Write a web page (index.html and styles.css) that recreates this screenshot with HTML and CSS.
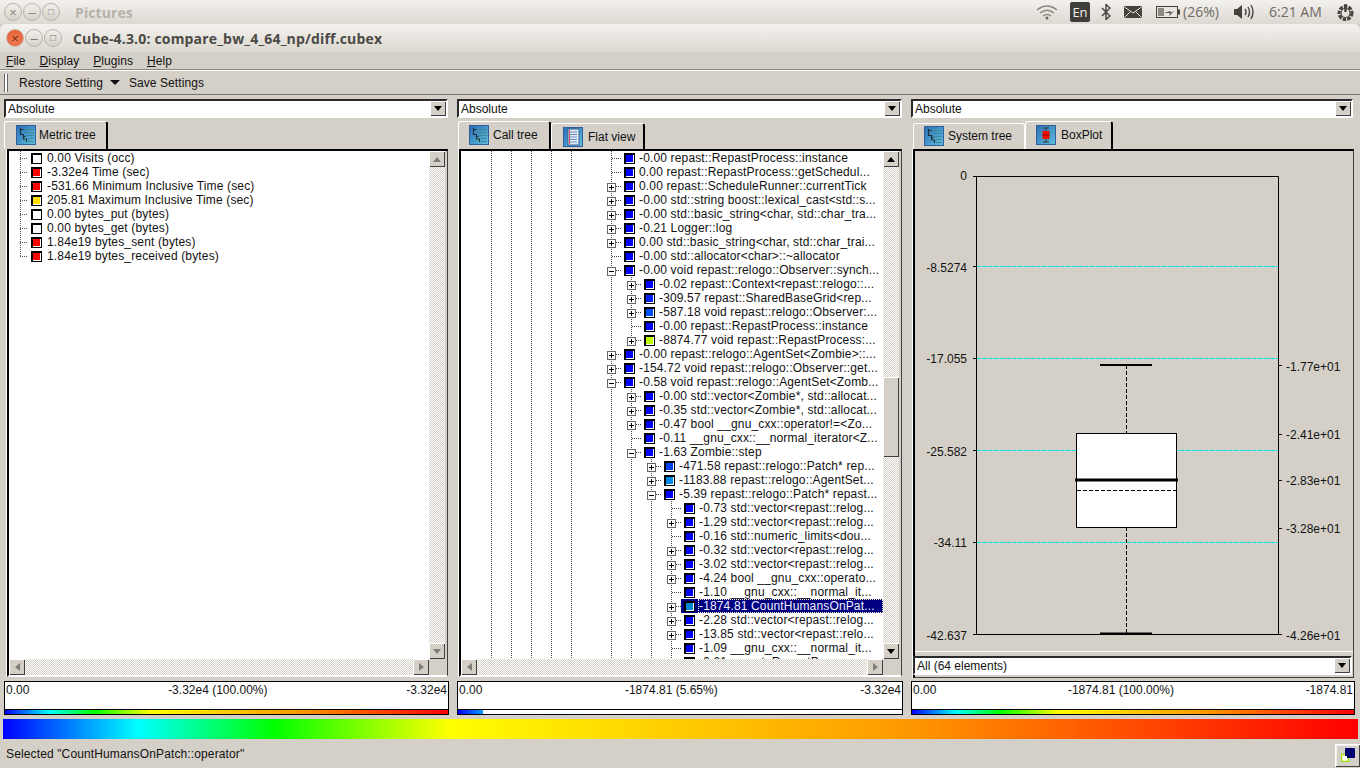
FILE: index.html
```html
<!DOCTYPE html>
<html lang="en">
<head>
<meta charset="utf-8">
<title>Cube-4.3.0</title>
<link rel="stylesheet" href="styles.css">
</head>
<body>
<svg class="defs" width="0" height="0">
  <defs>
    <linearGradient id="blue" x1="0" y1="0" x2="1" y2="1">
      <stop offset="0" stop-color="#2a6cb4"/><stop offset="1" stop-color="#5fc0dc"/>
    </linearGradient>
    <symbol id="i-tree" viewBox="0 0 20 20">
      <rect x="0.5" y="0.5" width="19" height="19" fill="url(#blue)" stroke="#2f5f9f"/>
      <path d="M8 4.500h10M8 7.500h10M10 10.500h8M12 13.500h6M12 16.500h6" stroke="#3f8796" stroke-width="1.200"/>
      <path d="M4.500 3v6.500h3V14h3v3" fill="none" stroke="#1c2c3c" stroke-width="1.100"/>
      <path d="M4.500 4.500h3M7.500 11.500h2" stroke="#1c2c3c" stroke-width="1"/>
      <path d="M8 14h2" stroke="#2c8c50" stroke-width="1"/>
    </symbol>
    <symbol id="i-flat" viewBox="0 0 20 20">
      <rect x="0.5" y="0.5" width="19" height="19" fill="url(#blue)" stroke="#2f5f9f"/>
      <rect x="5" y="2" width="11" height="16" fill="#dfeaf4" stroke="#3a5f90"/>
      <path d="M7 5h7M7 7.5h7M7 10h7M7 12.500h7M7 15h7" stroke="#6a90c0"/>
      <path d="M6.500 3v14" stroke="#d05060"/>
    </symbol>
    <symbol id="i-box" viewBox="0 0 20 20">
      <rect x="0.5" y="0.5" width="19" height="19" fill="url(#blue)" stroke="#2f5f9f"/>
      <path d="M7 3h6M10 3v14M7 17h6" fill="none" stroke="#333"/>
      <rect x="6.500" y="6" width="7" height="8" fill="#f01000"/>
      <path d="M6.500 10h7" stroke="#800"/>
    </symbol>
  </defs>
</svg>
<div class="app">
  <header class="panel">
    <div class="wbtns">
      <span class="wbtn dim">×</span><span class="wbtn dim">–</span><span class="wbtn dim sq">□</span>
    </div>
    <span class="panel-title">Pictures</span>
    <div class="indicators">
      <svg class="ic-wifi" width="22" height="16" viewBox="0 0 22 16"><path d="M1 6q10-8 20 0M4 9q7-5.500 14 0M7 12q4-3 8 0" fill="none" stroke="#8d8880" stroke-width="1.500"/><circle cx="11" cy="14" r="1.500" fill="#6b665f"/></svg>
      <span class="en">En</span>
      <svg class="ic-bt" width="10" height="16" viewBox="0 0 10 16"><path d="M1 4l8 8-4 3.500V.5l4 3.500-8 8" fill="none" stroke="#4a4640" stroke-width="1.500"/></svg>
      <svg class="ic-mail" width="18" height="12" viewBox="0 0 18 12"><rect width="18" height="12" rx="1" fill="#45413b"/><path d="M0.500 1l8.500 6 8.500-6M0.500 11.500l6-6M17.500 11.500l-6-6" fill="none" stroke="#e8e4df"/></svg>
      <svg class="ic-batt" width="24" height="12" viewBox="0 0 24 12"><rect x="0.500" y="0.500" width="21" height="11" fill="#e8e4df" stroke="#45413b"/><rect x="2" y="2" width="6" height="8" fill="#8d8880"/><rect x="22" y="3.500" width="2" height="5" fill="#45413b"/><path d="M8 7l7-2-1 2 4-2-5 5 1-3z" fill="#45413b"/></svg>
      <span class="ptext pct">(26%)</span>
      <svg class="ic-vol" width="20" height="16" viewBox="0 0 20 16"><path d="M0 5h3l5-4v14l-5-4H0z" fill="#45413b"/><path d="M11 5q2 3 0 6M14 3q3 5 0 10M17 1q4 7 0 14" fill="none" stroke="#45413b" stroke-width="1.400"/></svg>
      <span class="ptext clock">6:21 AM</span>
      <svg class="ic-power" width="19" height="19" viewBox="0 0 19 19"><circle cx="9.500" cy="10" r="6.500" fill="none" stroke="#45413b" stroke-width="3" stroke-dasharray="3.500 1.200"/><circle cx="9.500" cy="10" r="4.500" fill="none" stroke="#45413b" stroke-width="1.200"/><path d="M9.500 1v8" stroke="#45413b" stroke-width="2.400"/></svg>
    </div>
  </header>

  <div class="titlebar">
    <div class="wbtns">
      <span class="wbtn close">×</span><span class="wbtn">–</span><span class="wbtn sq">□</span>
    </div>
    <span class="win-title">Cube-4.3.0: compare_bw_4_64_np/diff.cubex</span>
  </div>

  <nav class="menubar">
    <span><u>F</u>ile</span><span><u>D</u>isplay</span><span><u>P</u>lugins</span><span><u>H</u>elp</span>
  </nav>

  <div class="toolbar">
    <span class="grip"></span>
    <span>Restore Setting</span>
    <span class="tb-arrow"></span>
    <span>Save Settings</span>
  </div>

  <main class="columns">
    <section class="col col-left">
      <div class="combo"><span class="combo-text">Absolute</span><span class="sbtn"><i class="tri down"></i></span></div>
      <div class="tabs">
        <div class="tab active tab-metric"><svg class="tab-ic"><use href="#i-tree"/></svg>Metric tree</div>
      </div>
      <div class="frame frame-tree">
        <div class="viewport">
          <div class="mrow"><span class="hd"></span><span class="sw"></span><span class="tx">0.00 Visits (occ)</span></div>
          <div class="mrow"><span class="hd"></span><span class="sw red"></span><span class="tx">-3.32e4 Time (sec)</span></div>
          <div class="mrow"><span class="hd"></span><span class="sw red"></span><span class="tx">-531.66 Minimum Inclusive Time (sec)</span></div>
          <div class="mrow"><span class="hd"></span><span class="sw yellow"></span><span class="tx">205.81 Maximum Inclusive Time (sec)</span></div>
          <div class="mrow"><span class="hd"></span><span class="sw"></span><span class="tx">0.00 bytes_put (bytes)</span></div>
          <div class="mrow"><span class="hd"></span><span class="sw"></span><span class="tx">0.00 bytes_get (bytes)</span></div>
          <div class="mrow"><span class="hd"></span><span class="sw red"></span><span class="tx">1.84e19 bytes_sent (bytes)</span></div>
          <div class="mrow end"><span class="hd"></span><span class="sw red"></span><span class="tx">1.84e19 bytes_received (bytes)</span></div>
        </div>
        <div class="vbar">
          <span class="sbtn dis"><i class="tri up"></i></span>
          <span class="track"></span>
          <span class="sbtn dis"><i class="tri down"></i></span>
        </div>
        <div class="hbar">
          <span class="sbtn dis"><i class="tri left"></i></span>
          <span class="track"></span>
          <span class="sbtn dis"><i class="tri right"></i></span>
        </div>
        <span class="corner"></span>
      </div>
      <div class="vbox">
        <div class="vtext"><span>0.00</span><span>-3.32e4 (100.00%)</span><span>-3.32e4</span></div>
        <div class="vgrad"><div class="vfill"></div></div>
      </div>
    </section>

    <section class="col col-mid">
      <div class="combo"><span class="combo-text">Absolute</span><span class="sbtn"><i class="tri down"></i></span></div>
      <div class="tabs">
        <div class="tab active tab-call"><svg class="tab-ic"><use href="#i-tree"/></svg>Call tree</div>
        <div class="tab tab-flat"><svg class="tab-ic"><use href="#i-flat"/></svg>Flat view</div>
      </div>
      <div class="frame frame-tree">
        <div class="viewport">
          <div class="row l0"><span class="hd"></span><span class="sw blue"></span><span class="tx">-0.00 repast::RepastProcess::instance</span></div>
          <div class="row l0"><span class="hd"></span><span class="sw blue"></span><span class="tx">0.00 repast::RepastProcess::getSchedul...</span></div>
          <div class="row l0"><span class="hd"><b class="ex plus"></b></span><span class="sw blue"></span><span class="tx">0.00 repast::ScheduleRunner::currentTick</span></div>
          <div class="row l0"><span class="hd"><b class="ex plus"></b></span><span class="sw blue"></span><span class="tx">-0.00 std::string boost::lexical_cast&lt;std::s...</span></div>
          <div class="row l0"><span class="hd"><b class="ex plus"></b></span><span class="sw blue"></span><span class="tx">-0.00 std::basic_string&lt;char, std::char_tra...</span></div>
          <div class="row l0"><span class="hd"><b class="ex plus"></b></span><span class="sw blue"></span><span class="tx">-0.21 Logger::log</span></div>
          <div class="row l0"><span class="hd"><b class="ex plus"></b></span><span class="sw blue"></span><span class="tx">0.00 std::basic_string&lt;char, std::char_trai...</span></div>
          <div class="row l0"><span class="hd"></span><span class="sw blue"></span><span class="tx">-0.00 std::allocator&lt;char&gt;::~allocator</span></div>
          <div class="row l0"><span class="hd"><b class="ex"></b></span><span class="sw blue"></span><span class="tx">-0.00 void repast::relogo::Observer::synch...</span></div>
          <div class="row l1"><span class="hd"><b class="ex plus"></b></span><span class="sw blue"></span><span class="tx">-0.02 repast::Context&lt;repast::relogo::...</span></div>
          <div class="row l1"><span class="hd"><b class="ex plus"></b></span><span class="sw b2"></span><span class="tx">-309.57 repast::SharedBaseGrid&lt;rep...</span></div>
          <div class="row l1"><span class="hd"><b class="ex plus"></b></span><span class="sw b3"></span><span class="tx">-587.18 void repast::relogo::Observer:...</span></div>
          <div class="row l1"><span class="hd"></span><span class="sw blue"></span><span class="tx">-0.00 repast::RepastProcess::instance</span></div>
          <div class="row l1 end"><span class="hd"><b class="ex plus"></b></span><span class="sw lime"></span><span class="tx">-8874.77 void repast::RepastProcess:...</span></div>
          <div class="row l0"><span class="hd"><b class="ex plus"></b></span><span class="sw blue"></span><span class="tx">-0.00 repast::relogo::AgentSet&lt;Zombie&gt;::...</span></div>
          <div class="row l0"><span class="hd"><b class="ex plus"></b></span><span class="sw blue"></span><span class="tx">-154.72 void repast::relogo::Observer::get...</span></div>
          <div class="row l0"><span class="hd"><b class="ex"></b></span><span class="sw blue"></span><span class="tx">-0.58 void repast::relogo::AgentSet&lt;Zomb...</span></div>
          <div class="row l1"><span class="hd"><b class="ex plus"></b></span><span class="sw blue"></span><span class="tx">-0.00 std::vector&lt;Zombie*, std::allocat...</span></div>
          <div class="row l1"><span class="hd"><b class="ex plus"></b></span><span class="sw blue"></span><span class="tx">-0.35 std::vector&lt;Zombie*, std::allocat...</span></div>
          <div class="row l1"><span class="hd"><b class="ex plus"></b></span><span class="sw blue"></span><span class="tx">-0.47 bool __gnu_cxx::operator!=&lt;Zo...</span></div>
          <div class="row l1"><span class="hd"></span><span class="sw blue"></span><span class="tx">-0.11 __gnu_cxx::__normal_iterator&lt;Z...</span></div>
          <div class="row l1"><span class="hd"><b class="ex"></b></span><span class="sw blue"></span><span class="tx">-1.63 Zombie::step</span></div>
          <div class="row l2"><span class="hd"><b class="ex plus"></b></span><span class="sw b4"></span><span class="tx">-471.58 repast::relogo::Patch* rep...</span></div>
          <div class="row l2"><span class="hd"><b class="ex plus"></b></span><span class="sw b5"></span><span class="tx">-1183.88 repast::relogo::AgentSet...</span></div>
          <div class="row l2"><span class="hd"><b class="ex"></b></span><span class="sw blue"></span><span class="tx">-5.39 repast::relogo::Patch* repast...</span></div>
          <div class="row l3"><span class="hd"></span><span class="sw blue"></span><span class="tx">-0.73 std::vector&lt;repast::relog...</span></div>
          <div class="row l3"><span class="hd"><b class="ex plus"></b></span><span class="sw blue"></span><span class="tx">-1.29 std::vector&lt;repast::relog...</span></div>
          <div class="row l3"><span class="hd"></span><span class="sw blue"></span><span class="tx">-0.16 std::numeric_limits&lt;dou...</span></div>
          <div class="row l3"><span class="hd"><b class="ex plus"></b></span><span class="sw blue"></span><span class="tx">-0.32 std::vector&lt;repast::relog...</span></div>
          <div class="row l3"><span class="hd"><b class="ex plus"></b></span><span class="sw blue"></span><span class="tx">-3.02 std::vector&lt;repast::relog...</span></div>
          <div class="row l3"><span class="hd"><b class="ex plus"></b></span><span class="sw blue"></span><span class="tx">-4.24 bool __gnu_cxx::operato...</span></div>
          <div class="row l3"><span class="hd"></span><span class="sw blue"></span><span class="tx">-1.10 __gnu_cxx::__normal_it...</span></div>
          <div class="row l3 selected"><span class="hd"><b class="ex plus"></b></span><span class="sel"><span class="sw b6"></span><span class="tx">-1874.81 CountHumansOnPat...</span></span></div>
          <div class="row l3"><span class="hd"><b class="ex plus"></b></span><span class="sw blue"></span><span class="tx">-2.28 std::vector&lt;repast::relog...</span></div>
          <div class="row l3"><span class="hd"><b class="ex plus"></b></span><span class="sw blue"></span><span class="tx">-13.85 std::vector&lt;repast::relo...</span></div>
          <div class="row l3"><span class="hd"></span><span class="sw blue"></span><span class="tx">-1.09 __gnu_cxx::__normal_it...</span></div>
          <div class="row l3"><span class="hd"></span><span class="sw blue"></span><span class="tx">-0.01 repast::RepastProcess...</span></div>
        </div>
        <div class="vbar">
          <span class="sbtn"><i class="tri up"></i></span>
          <span class="track track-a"></span>
          <span class="thumb"></span>
          <span class="track"></span>
          <span class="sbtn"><i class="tri down"></i></span>
        </div>
        <div class="hbar">
          <span class="sbtn dis"><i class="tri left"></i></span>
          <span class="track"></span>
          <span class="sbtn dis"><i class="tri right"></i></span>
        </div>
        <span class="corner"></span>
      </div>
      <div class="vbox">
        <div class="vtext"><span>0.00</span><span>-1874.81 (5.65%)</span><span>-3.32e4</span></div>
        <div class="vgrad"><div class="vfill part" style="width:5.65%"></div></div>
      </div>
    </section>

    <section class="col col-right">
      <div class="combo"><span class="combo-text">Absolute</span><span class="sbtn"><i class="tri down"></i></span></div>
      <div class="tabs">
        <div class="tab tab-sys"><svg class="tab-ic"><use href="#i-tree"/></svg>System tree</div>
        <div class="tab active tab-box"><svg class="tab-ic"><use href="#i-box"/></svg>BoxPlot</div>
      </div>
      <div class="frame frame-plot">
        <svg class="plot" width="438" height="500" viewBox="915 151 438 500">
          <g class="cy">
            <path d="M976 266.500H1278M976 358.500H1278M976 450.500H1278M976 542.500H1278"/>
          </g>
          <g class="ax">
            <path d="M976.500 176.500V634.500M1278.500 176.500V634.500M973 176.500H1278.500M973 634.500H1278.500"/>
            <path d="M973 266.500h3M973 358.500h3M973 450.500h3M973 542.500h3"/>
            <path d="M1278 365.500h4M1278 434.500h4M1278 480.500h4M1278 528.500h4M1278 634.500h4"/>
          </g>
          <path class="wh" d="M1126.500 365V433M1126.500 527V634"/>
          <rect class="bx" x="1076.500" y="433.500" width="100" height="94"/>
          <path class="cap" d="M1100 365h52M1100 633.500h52"/>
          <path class="med" d="M1075 480h103"/>
          <path class="mean" d="M1077 490.500h99"/>
          <g class="ll">
            <text x="967" y="180">0</text>
            <text x="967" y="272">-8.5274</text>
            <text x="967" y="363">-17.055</text>
            <text x="967" y="456">-25.582</text>
            <text x="967" y="547">-34.11</text>
            <text x="967" y="640">-42.637</text>
          </g>
          <g class="rl">
            <text x="1286" y="371">-1.77e+01</text>
            <text x="1286" y="439">-2.41e+01</text>
            <text x="1286" y="485">-2.83e+01</text>
            <text x="1286" y="533">-3.28e+01</text>
            <text x="1286" y="640">-4.26e+01</text>
          </g>
        </svg>
        <div class="combo combo-in"><span class="combo-text">All (64 elements)</span><span class="sbtn"><i class="tri down"></i></span></div>
      </div>
      <div class="vbox">
        <div class="vtext"><span>0.00</span><span>-1874.81 (100.00%)</span><span>-1874.81</span></div>
        <div class="vgrad"><div class="vfill"></div></div>
      </div>
    </section>
  </main>

  <div class="spectrum"></div>

  <footer class="status">
    <span class="status-text">Selected "CountHumansOnPatch::operator"</span>
    <span class="cornerbtn"><svg width="14" height="14" viewBox="0 0 14 14"><rect x="0.500" y="6.500" width="7" height="7" fill="#fff" stroke="#a0e000" stroke-width="1.500"/><rect x="4" y="0" width="10" height="10" rx="1" fill="#000070"/><rect x="2" y="8" width="4" height="4" fill="#fff"/></svg></span>
  </footer>
</div>
</body>
</html>
```
FILE: styles.css
```css
* { box-sizing: border-box; }
html, body { margin: 0; padding: 0; }
body {
  width: 1360px; height: 768px; overflow: hidden;
  background: #d4d0c8; color: #111;
  font: 12px/14px "Liberation Sans", Arial, sans-serif;
}
.defs { display: block; height: 0; }
.app { display: flex; flex-direction: column; width: 1360px; height: 768px; }

/* desktop panel */
.panel {
  display: flex; align-items: center; height: 24px; flex: none;
  padding-left: 4px;
  background: linear-gradient(#f3f1ee, #dcd8d2);
}
.wbtns { display: flex; gap: 1px; }
.wbtn {
  display: flex; align-items: center; justify-content: center;
  width: 18px; height: 18px; border-radius: 50%;
  border: 1px solid #b8b4ac; background: linear-gradient(#f2f0ec, #d6d2ca);
  color: #7a766e; font-size: 13px; line-height: 1;
}
.wbtn.sq { font-size: 10px; }
.wbtn.dim { color: #8a867e; }
.wbtn.close { background: radial-gradient(circle at 50% 60%, #f5825a, #e2532a); border-color: #c8b8a8; color: #7a2c10; }
.panel-title {
  margin-left: 15px; color: #b6b2aa; letter-spacing: .1px;
  font: bold 14px "Open Sans", "Noto Sans", sans-serif;
}
.indicators { display: flex; align-items: center; margin-left: auto; }
.ic-wifi { margin-right: 12px; }
.en {
  width: 20px; height: 20px; margin-right: 11px; border-radius: 2px;
  background: #3f3e3a; color: #f2f0ec; text-align: center;
  font: 13px/20px "Open Sans", sans-serif;
}
.ic-bt { margin-right: 13px; }
.ic-mail { margin-right: 14px; }
.ic-batt { margin-right: 3px; }
.ptext { color: #6f6a62; font: 14px/20px "Open Sans", "Noto Sans", sans-serif; white-space: nowrap; }
.pct { width: 42px; margin-right: 9px; }
.ic-vol { margin-right: 15px; }
.clock { width: 56px; margin-right: 11px; }
.ic-power { margin-right: 5px; }

/* window chrome */
.titlebar {
  display: flex; align-items: center; height: 28px; flex: none;
  padding-left: 6px; border-radius: 6px 6px 0 0;
  background: linear-gradient(#f5f3f0, #dbd7d0);
}
.win-title {
  margin-left: 11px; color: #4c4a45; letter-spacing: .17px;
  font: bold 14px "Open Sans", "Noto Sans", sans-serif;
}
.menubar {
  display: flex; gap: 14px; height: 18px; flex: none; letter-spacing: .05px;
  padding: 2px 0 0 6px; border-bottom: 1px solid #8a867e;
}
.toolbar {
  display: flex; align-items: center; height: 25px; flex: none; letter-spacing: .08px;
  padding-left: 4px; border-top: 1px solid #fff; border-bottom: 1px solid #77736b;
}
.grip {
  width: 4px; height: 18px; margin-right: 11px;
  border-left: 1px solid #666; border-right: 1px solid #666; background: #fff;
}
.tb-arrow {
  width: 0; height: 0; margin: 0 9px 0 7px;
  border-left: 5px solid transparent; border-right: 5px solid transparent; border-top: 5px solid #111;
}

/* three columns */
.columns { display: flex; gap: 8px; padding: 4px 0 0 4px; flex: none; }
.col { display: flex; flex-direction: column; flex: none; }
.col-left { width: 445px; }
.col-mid { width: 446px; }
.col-right { width: 444px; }

.combo {
  display: flex; align-items: center; justify-content: space-between;
  height: 19px; padding-left: 2px; background: #fff;
  border: 2px solid; border-color: #2a2a2a #fff #fff #2a2a2a;
  flex: none;
}
.combo-text { line-height: 15px; padding-top: 1px; }
.col-left > .combo { margin-right: 1px; }
.col-mid > .combo { margin-right: 1px; }
.col-right > .combo { margin-right: 2px; }

.sbtn {
  display: flex; align-items: center; justify-content: center;
  width: 16px; height: 16px; flex: none; background: #d4d0c8;
  box-shadow: inset 1px 1px 0 #fff, inset -1px -1px 0 #404040;
}
.combo .sbtn { height: 15px; }
.tri { display: block; width: 0; height: 0; border: 4px solid transparent; }
.tri.down { border-top: 5px solid #000; border-bottom: 0; }
.tri.up { border-bottom: 5px solid #000; border-top: 0; }
.tri.left { border-right: 5px solid #000; border-left: 0; }
.tri.right { border-left: 5px solid #000; border-right: 0; }
.dis .tri.down { border-top-color: #807c74; }
.dis .tri.up { border-bottom-color: #807c74; }
.dis .tri.left { border-right-color: #807c74; }
.dis .tri.right { border-left-color: #807c74; }

/* tabs */
.tabs { display: flex; align-items: flex-end; height: 28px; margin-top: 3px; flex: none; }
.col-mid .tabs { padding-left: 1px; }
.tab {
  display: flex; align-items: center; gap: 4px; height: 26px;
  padding-left: 10px; border: 1px solid; border-color: #fff #000 transparent #fff;
  border-right-width: 2px; border-bottom: 0; border-radius: 3px 3px 0 0;
  white-space: nowrap; flex: none;
}
.tab.active { height: 28px; padding-bottom: 1px; }
.tab-metric { width: 104px; padding-left: 11px; gap: 3px; }
.tab-call { width: 93px; }
.tab-flat { width: 94px; padding-left: 11px; gap: 5px; }
.tab-sys { width: 112px; margin-left: 2px; border-right: 1px solid #fff; padding-bottom: 1px; }
.tab-box { width: 88px; gap: 5px; }
.tab-ic { width: 20px; height: 20px; flex: none; }

/* framed view */
.frame {
  flex: none; height: 528px; margin-left: 3px; margin-right: 1px;
  border: 2px solid; border-color: #000 #404040 #fff #000; border-right-width: 1px;
  box-shadow: -1px 0 0 #fff;
}
.frame-tree {
  display: grid; grid-template-columns: 420px 16px; grid-template-rows: 508px 16px; padding-right: 2px;
}
.col-mid .frame-tree { margin-left: 2px; grid-template-columns: 422px 16px; }
.viewport { background: #fff; overflow: hidden; min-width: 0; }

.mrow, .row {
  display: flex; align-items: center; height: 14px; flex: none; white-space: nowrap; overflow: hidden;
}
.mrow {
  padding-left: 11px;
  background: repeating-linear-gradient(#555 0 1px, transparent 1px 2px) 0 0 / 1px 100% no-repeat;
  background-position: 11px 0;
}
.mrow.end { background-size: 1px 50%; }
.mrow .hd {
  width: 11px; height: 14px; flex: none;
  background: repeating-linear-gradient(90deg, #555 0 1px, transparent 1px 2px) 0 7px / 8px 1px no-repeat;
}
.mrow .tx { letter-spacing: .15px; }
.row .tx { letter-spacing: .15px; margin-left: 4px; }

.row {
  --d: repeating-linear-gradient(#444 0 1px, transparent 1px 2px);
  background-repeat: no-repeat; background-size: 1px 100%;
}
.l0 { padding-left: 146px;
  background-image: var(--d), var(--d), var(--d), var(--d), var(--d), var(--d);
  background-position: 30px 0, 50px 0, 70px 0, 90px 0, 110px 0, 150px 0; }
.l1 { padding-left: 166px;
  background-image: var(--d), var(--d), var(--d), var(--d), var(--d), var(--d), var(--d);
  background-position: 30px 0, 50px 0, 70px 0, 90px 0, 110px 0, 150px 0, 170px 0; }
.l1.end { background-size: 1px 100%, 1px 100%, 1px 100%, 1px 100%, 1px 100%, 1px 100%, 1px 50%; }
.l2 { padding-left: 186px;
  background-image: var(--d), var(--d), var(--d), var(--d), var(--d), var(--d), var(--d), var(--d);
  background-position: 30px 0, 50px 0, 70px 0, 90px 0, 110px 0, 150px 0, 170px 0, 190px 0; }
.l3 { padding-left: 206px;
  background-image: var(--d), var(--d), var(--d), var(--d), var(--d), var(--d), var(--d), var(--d), var(--d);
  background-position: 30px 0, 50px 0, 70px 0, 90px 0, 110px 0, 150px 0, 170px 0, 190px 0, 210px 0; }

.row .hd {
  display: flex; align-items: flex-start; width: 17px; height: 14px; flex: none; padding-top: 4px;
  background: repeating-linear-gradient(90deg, #444 0 1px, transparent 1px 2px) 5px 7px / 10px 1px no-repeat;
}
.ex {
  display: block; width: 9px; height: 9px; border: 1px solid #666;
  background: linear-gradient(#000, #000) center / 5px 1px no-repeat, #fff;
}
.ex.plus {
  background: linear-gradient(#000, #000) center / 5px 1px no-repeat,
              linear-gradient(#000, #000) center / 1px 5px no-repeat, #fff;
}
.sw {
  display: block; width: 11px; height: 11px; flex: none; background: #fff;
  border: 1px solid #000; box-shadow: inset 1px 1px 0 #000, inset -1px -1px 0 #fff;
}
.sw.red { background: #f00; }
.sw.yellow { background: #ffe000; }
.sw.blue { background: #0000ff; }
.sw.b2 { background: #0020f8; }
.sw.b3 { background: #0050ff; }
.sw.b4 { background: #0040f0; }
.sw.b5 { background: #0088e8; }
.sw.b6 { background: #0088d0; }
.sw.lime { background: #c0ff00; }
.tx { margin-left: 5px; }

.row.selected { overflow: hidden; }
.sel {
  display: flex; align-items: center; flex: 1; height: 14px; margin-left: -3px; padding-left: 3px;
  background: #000080; color: #f0f0ff;
}
.row .sel .tx {
  flex: 1; height: 14px; margin-left: 3px; padding-left: 1px;
  outline: 1px dotted #f4f4c8; outline-offset: -1px;
}

.vbar { display: flex; flex-direction: column; width: 16px; height: 508px; }
.hbar { display: flex; height: 16px; }
.track {
  display: block; flex: 1;
  background: repeating-conic-gradient(#d4d0c8 0 25%, #fff 0 50%) 0 0 / 2px 2px;
}
.track-a { flex: none; height: 210px; }
.thumb {
  display: block; height: 80px; flex: none; background: #d4d0c8;
  box-shadow: inset 1px 1px 0 #fff, inset -1px -1px 0 #404040;
}
.corner { background: #d4d0c8; }

/* box plot */
.frame-plot {
  display: flex; flex-direction: column; margin-left: 2px; margin-right: 1px; height: 529px;
  border-bottom: 1px solid #404040;
}
.plot { display: block; flex: none; border-bottom: 1px solid #fff; box-sizing: content-box; }
.combo-in { margin: 4px 1px 0 -2px; }
.cy path { fill: none; stroke: #00e8e8; stroke-dasharray: 5 1; }
.ax path { fill: none; stroke: #000; }
.wh { fill: none; stroke: #000; stroke-dasharray: 4 2; }
.bx { fill: #fff; stroke: #000; }
.cap { fill: none; stroke: #000; stroke-width: 2; }
.med { fill: none; stroke: #000; stroke-width: 3; }
.mean { fill: none; stroke: #000; stroke-dasharray: 4 2; }
.plot text { font: 12px "Liberation Sans", Arial, sans-serif; fill: #111; }
.ll text { text-anchor: end; }

/* value bars */
.vbox { height: 34px; margin-top: 4px; border: 1px solid #000; background: #fff; flex: none; }
.col-right .vbox { margin-top: 3px; }
.vtext {
  display: flex; justify-content: space-between; height: 28px;
  padding: 1px 1px 0 1px; border-bottom: 1px solid #000;
}
.vgrad { height: 4px; background: #fff; }
.vfill, .spectrum {
  background: linear-gradient(90deg, #0000ff 0, #00ffff 10%, #00ff00 20%, #ffff00 33%, #ff9900 66.500%, #ff0000 100%);
}
.vfill { height: 4px; }
.vfill.part { background: linear-gradient(90deg, #0000ff, #00a0ff); }

.spectrum { height: 20px; margin: 4px 2px 0 3px; flex: none; }

.status {
  display: flex; align-items: center; justify-content: space-between; flex: 1;
  padding-left: 6px;
}
.status-text { letter-spacing: .13px; }
.cornerbtn {
  display: flex; align-items: center; justify-content: center;
  width: 25px; height: 23px; background: #d4d0c8; margin-top: 3px;
  box-shadow: inset 1px 1px 0 #fff, inset -1px -1px 0 #404040, inset 2px 2px 0 #eee;
}
```
